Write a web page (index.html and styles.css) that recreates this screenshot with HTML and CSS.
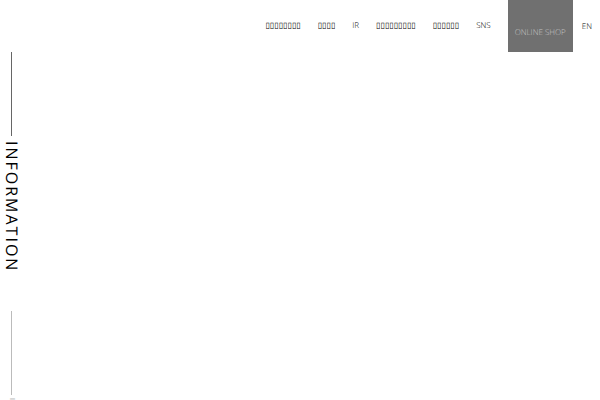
FILE: index.html
```html
<!DOCTYPE html>
<html lang="ja">
<head>
<meta charset="utf-8">
<title>Information</title>
<link rel="stylesheet" href="styles.css">
</head>
<body>
<header class="header">
  <nav class="nav">
    <a class="boxes" href="#">▯▯▯▯▯▯▯▯</a>
    <a class="boxes" href="#">▯▯▯▯</a>
    <a href="#">IR</a>
    <a class="boxes" href="#">▯▯▯▯▯▯▯▯▯</a>
    <a class="boxes" href="#">▯▯▯▯▯▯</a>
    <a href="#">SNS</a>
  </nav>
  <a class="shop" href="#">ONLINE SHOP</a>
  <a class="lang" href="#">EN</a>
</header>
<main class="rail">
  <h1 class="title">INFORMATION</h1>
  <p class="next">I</p>
</main>
</body>
</html>
```
FILE: styles.css
```css
* {
  box-sizing: border-box;
}

body {
  margin: 0;
  height: 100vh;
  overflow: hidden;
  background: #fff;
  color: #000;
  font-family: "Open Sans", "Noto Sans", sans-serif;
  font-size: 7px;
  text-rendering: geometricPrecision;
}

a {
  color: inherit;
  text-decoration: none;
}

.header {
  display: flex;
  justify-content: flex-end;
  align-items: center;
  height: 52px;
  padding-right: 8px;
  font-size: 8px;
  font-weight: 300;
}

.nav {
  display: flex;
  align-items: center;
  gap: 17px;
  line-height: 12px;
}

.boxes {
  font-family: "DejaVu Sans", sans-serif;
  font-size: 8px;
}

.shop {
  height: 52px;
  margin: 0 9px 0 17px;
  padding: 27px 7px 0;
  background: #707070;
  color: #c4c4c4;
  line-height: 12px;
}

.rail {
  display: flex;
  flex-direction: column;
  align-items: center;
  width: 23px;
}

.title,
.next {
  display: flex;
  align-items: center;
  margin: 0;
  writing-mode: vertical-rl;
  white-space: nowrap;
}

.title {
  height: 259px;
  gap: 5px;
  font-size: 16px;
  font-weight: 500;
  line-height: 23px;
  letter-spacing: 2px;
}

.title::before,
.next::before {
  content: "";
  width: 1px;
  height: 84px;
  background: #666;
}

.next {
  gap: 3px;
  color: #888;
  line-height: 23px;
}

.next::before {
  background: #bbb;
}
```
